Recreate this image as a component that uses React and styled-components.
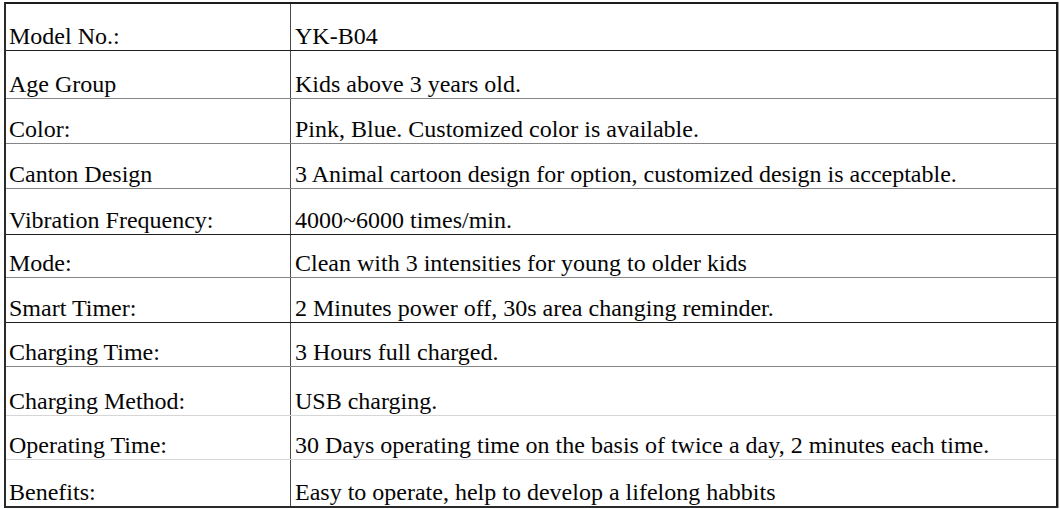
import styled, { createGlobalStyle } from 'styled-components'

const GlobalStyle = createGlobalStyle`
body {
    margin: 0;
    background: #fff;
}
`

const Page = styled.div`
padding: 2px 0 0 4px;
`

const Sheet = styled.div`
width: 1050px;
display: flex;
flex-direction: column;
border-top: 2px solid #1c1c1c;
border-left: 2px solid #2a2a2a;
border-bottom: 2px solid #2a2a2a;
border-right: 2px solid #1c1c1c;
box-shadow: 1px 0 0 #9a9a9a;
font-family: "Liberation Serif", "Times New Roman", serif;
font-size: 24px;
line-height: 24px;
color: #050505;
`

const Row = styled.div`
display: grid;
grid-template-columns: 285px 1fr;
height: ${props => props.h}px;
box-sizing: border-box;
border-bottom: ${props => props.line ? `1px solid ${props.line}` : 'none'};
`

const Label = styled.div`
display: flex;
align-items: flex-end;
padding: 0 0 2px 3px;
border-right: 1px solid #4a4a4a;
white-space: nowrap;
`

const Value = styled.div`
display: flex;
align-items: flex-end;
padding: 0 0 2px 4px;
white-space: nowrap;
`

const DARK = '#1e1e1e'
const GRAY = '#858585'
const LIGHT = '#d6d6d6'

const specs = [
    { label: 'Model No.:', value: 'YK-B04', h: 47, line: DARK },
    { label: 'Age Group', value: 'Kids above 3 years old.', h: 48, line: GRAY },
    { label: 'Color:', value: 'Pink, Blue. Customized color is available.', h: 45, line: GRAY },
    { label: 'Canton Design', value: '3 Animal cartoon design for option, customized design is acceptable.', h: 45, line: GRAY },
    { label: 'Vibration Frequency:', value: '4000~6000 times/min.', h: 46, line: DARK },
    { label: 'Mode:', value: 'Clean with 3 intensities for young to older kids', h: 43, line: GRAY },
    { label: 'Smart Timer:', value: '2 Minutes power off, 30s area changing reminder.', h: 45, line: DARK },
    { label: 'Charging Time:', value: '3 Hours full charged.', h: 44, line: GRAY },
    { label: 'Charging Method:', value: 'USB charging.', h: 49, line: LIGHT },
    { label: 'Operating Time:', value: '30 Days operating time on the basis of twice a day, 2 minutes each time.', h: 44, line: LIGHT },
    { label: 'Benefits:', value: 'Easy to operate, help to develop a lifelong habbits', h: 46 },
]

const App = () => {
    return (
        <>
            <GlobalStyle />
            <Page>
                <Sheet>
                    {specs.map(item => (
                        <Row key={item.label} h={item.h} line={item.line}>
                            <Label>{item.label}</Label>
                            <Value>{item.value}</Value>
                        </Row>
                    ))}
                </Sheet>
            </Page>
        </>
    )
}

export default App
